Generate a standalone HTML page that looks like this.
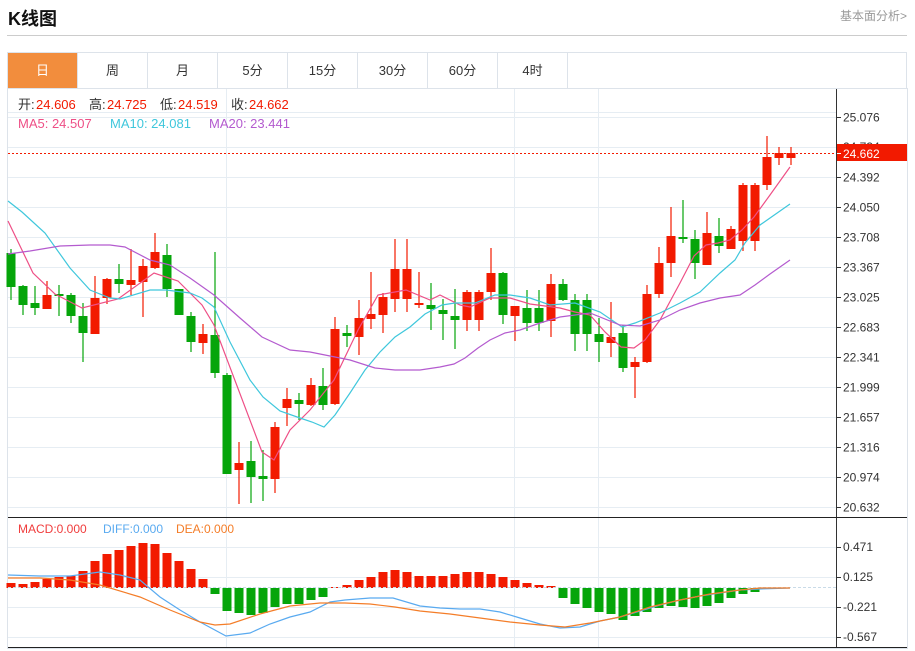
<!DOCTYPE html>
<html><head><meta charset="utf-8"><style>
*{margin:0;padding:0;box-sizing:border-box}
body{width:915px;height:651px;background:#fff;font-family:"Liberation Sans","Noto Sans CJK SC",sans-serif;position:relative;overflow:hidden}
.t{position:absolute;left:8px;top:5px;font-size:18px;font-weight:bold;color:#111}
.r{position:absolute;right:8px;top:7px;font-size:12px;color:#999}
.hl{position:absolute;left:7px;top:35px;width:900px;height:1px;background:#ccc}
.tabs{position:absolute;left:7px;top:52px;width:900px;height:37px;border:1px solid #dde3ea;display:flex}
.tabs div{width:70px;height:35px;line-height:35px;text-align:center;font-size:13px;color:#333;border-right:1px solid #dde3ea}
.tabs div.a{background:#f28d3d;color:#fff}
svg{position:absolute;left:0;top:0}
</style></head><body>
<div class="t">K线图</div><div class="r">基本面分析&gt;</div><div class="hl"></div>
<div class="tabs"><div class="a">日</div><div>周</div><div>月</div><div>5分</div><div>15分</div><div>30分</div><div>60分</div><div>4时</div></div>
<svg id="s" width="915" height="651" style="top:0"></svg>
<script>
var S='';
function L(x1,y1,x2,y2,c,w,d){S+='<line x1="'+x1+'" y1="'+y1+'" x2="'+x2+'" y2="'+y2+'" stroke="'+c+'" stroke-width="'+(w||1)+'"'+(d?' stroke-dasharray="'+d+'"':'')+'/>';}
function T(x,y,t,c,s){S+='<text x="'+x+'" y="'+y+'" fill="'+c+'" font-size="'+(s||12)+'" font-family="Liberation Sans,Noto Sans CJK SC,sans-serif">'+t+'</text>';}
function P(pts,c){S+='<polyline fill="none" stroke="'+c+'" stroke-width="1.2" points="'+pts.map(function(p){return p.join(',')}).join(' ')+'"/>';}
// frame
S+='<rect x="7.5" y="88.5" width="900" height="560" fill="none" stroke="#dde3ea"/>';
L(8,112.5,836,112.5,'#e6edf3');
var labs=['25.076','24.734','24.392','24.050','23.708','23.367','23.025','22.683','22.341','21.999','21.657','21.316','20.974','20.632'];
for(var i=0;i<14;i++){var y=117+i*30+.5;L(8,y,836,y,'#e6edf3');L(836,y,841,y,'#333');if(i!=1)T(843,y+4,labs[i],'#333');}
T(843,151,'24.734','#333');
[547,577,607,637].forEach(function(y,i){L(8,y+.5,836,y+.5,'#e6edf3');L(836,y+.5,841,y+.5,'#333');T(843,y+4,['0.471','0.125','-0.221','-0.567'][i],'#333');});
[226.5,514.5,598.5].forEach(function(x){L(x,89,x,647,'#e6edf3');});
L(836.5,89,836.5,517,'#333');L(836.5,518,836.5,648,'#333');
L(8,517.5,907,517.5,'#222');L(8,647.5,907,647.5,'#222');
// candles [open,close,high,low] y pixel; color by o<c? we pass color
var C=[[253,287,249,300,'g'],[286,305,285,315,'g'],[303,308,286,315,'g'],[295,309,281,309,'r'],[294,296,285,316,'g'],[295,316,293,323,'g'],[316,333,303,362,'g'],[298,334,276,334,'r'],[279,298,278,304,'r'],[279,284,264,293,'g'],[280,285,249,295,'r'],[266,282,259,317,'r'],[252,268,233,269,'r'],[255,289,244,297,'g'],[289,315,289,315,'g'],[316,342,312,352,'g'],[334,343,324,354,'r'],[335,373,252,378,'g'],[375,474,373,474,'g'],[463,470,442,504,'r'],[461,477,441,503,'g'],[476,479,450,501,'g'],[427,479,422,493,'r'],[399,408,388,426,'r'],[400,404,393,420,'g'],
[385,405,378,406,'r'],[386,405,368,410,'g'],[329,404,317,405,'r'],[333,336,325,347,'g'],[318,337,300,355,'r'],[314,319,272,329,'r'],[297,315,293,333,'r'],[269,299,239,312,'r'],[269,299,239,312,'r'],[303,304,272,308,'r'],[305,309,283,330,'g'],[310,314,299,340,'g'],[316,320,289,349,'g'],[292,320,290,331,'r'],[292,320,290,331,'r'],[273,292,248,300,'r'],[273,315,272,324,'g'],[306,316,306,341,'r'],[308,323,290,331,'g'],[308,323,290,331,'g'],[284,321,274,337,'r'],[284,300,279,301,'g'],[300,334,294,351,'g'],[300,334,294,351,'g'],
[334,342,318,362,'g'],[337,343,302,357,'r'],[333,368,325,372,'g'],[362,367,357,398,'r'],[294,362,285,363,'r'],[263,294,247,298,'r'],[236,263,207,277,'r'],[237,239,200,243,'g'],[239,263,230,279,'g'],[233,265,212,265,'r'],[236,246,218,253,'g'],[229,249,226,249,'r'],[185,241,183,251,'r'],[185,241,183,251,'r'],[157,185,136,190,'r'],[153,158,147,165,'r'],[153,158,147,165,'r']];
C.forEach(function(c,i){var x=11+i*12,col=c[4]=='r'?'#f21a00':'#05a50a';L(x,c[2],x,c[3],col,1.2);var t=Math.min(c[0],c[1]),h=Math.max(2,Math.abs(c[1]-c[0]));S+='<rect x="'+(x-4.5)+'" y="'+t+'" width="9" height="'+h+'" fill="'+col+'"/>';});
P([[8,221],[33,273],[55,294],[82,308],[118,299],[154,273],[178,281],[202,305],[214,325],[262,452],[274,460],[290,430],[310,410],[334,380],[358,330],[378,295],[406,290],[430,300],[440,295],[460,305],[470,307],[490,298],[510,298],[530,304],[560,308],[575,312],[590,315],[605,332],[621,347],[634,348],[645,340],[660,320],[680,283],[694,256],[706,245],[718,243],[730,240],[742,230],[754,217],[770,195],[790,167]],'#ee4f86');
P([[8,201],[22,212],[45,233],[70,268],[90,290],[110,298],[120,299],[150,290],[166,290],[190,293],[202,298],[214,307],[230,342],[250,380],[263,397],[280,411],[300,418],[312,422],[324,427],[335,415],[350,393],[365,370],[380,352],[395,337],[410,327],[425,314],[442,305],[455,303],[475,303],[495,295],[510,295],[530,298],[550,305],[575,303],[600,312],[622,327],[635,323],[660,313],[680,303],[700,292],[720,273],[735,260],[745,243],[760,225],[790,204]],'#3fc7dc');
P([[8,254],[30,251],[60,246],[90,245],[110,245],[125,247],[150,260],[170,265],[190,278],[214,295],[240,318],[262,337],[290,350],[310,352],[330,356],[350,360],[375,368],[395,370],[420,370],[440,367],[454,364],[465,358],[478,348],[490,340],[505,333],[520,330],[540,323],[560,317],[590,313],[620,325],[640,326],[660,320],[680,310],[700,303],[720,298],[740,295],[755,285],[770,274],[790,260]],'#b45bcf');
L(8,153.5,836,153.5,'#f21a00',1,'2,2');
S+='<rect x="837" y="144" width="70" height="17" fill="#f21a00"/>';L(837,153.5,841,153.5,'#fff');T(843,158,'24.662','#fff');
// info
T(18,109,'开:','#333',13);T(36,109,'24.606','#f21a00',13);T(89,109,'高:','#333',13);T(107,109,'24.725','#f21a00',13);T(160,109,'低:','#333',13);T(178,109,'24.519','#f21a00',13);T(231,109,'收:','#333',13);T(249,109,'24.662','#f21a00',13);
T(18,128,'MA5: 24.507','#ee4f86',13);T(110,128,'MA10: 24.081','#3fc7dc',13);T(209,128,'MA20: 23.441','#b45bcf',13);
T(18,533,'MACD:0.000','#f03c3c',12);T(103,533,'DIFF:0.000','#59aaf0',12);T(176,533,'DEA:0.000','#f47d28',12);
// macd
var M=[583,584,582,579,577,576,571,561,554,550,546,543,544,553,561,569,579,594,611,613,615,613,607,604,604,600,597,587,585,580,577,572,570,572,576,576,576,574,572,572,574,577,580,583,585,586,598,604,608,612,614,620,616,612,608,606,607,608,606,603,598,594,592,589,588,588];
var Z=588;
M.forEach(function(y,i){var x=11+i*12;if(y<Z){S+='<rect x="'+(x-4.5)+'" y="'+y+'" width="9" height="'+(Z-y)+'" fill="#f21a00"/>';}else if(y>Z){S+='<rect x="'+(x-4.5)+'" y="'+Z+'" width="9" height="'+(y-Z)+'" fill="#05a50a"/>';}});
L(8,587.5,836,587.5,'#c9dbe8',1,'3,2');
P([[8,575],[40,576],[70,576],[100,572],[120,575],[140,580],[160,597],[180,610],[200,622],[226,636],[250,633],[270,624],[290,617],[310,612],[330,602],[345,600],[370,598],[393,598],[420,606],[440,608],[460,609],[480,609],[500,612],[520,618],[540,624],[560,628],[580,627],[600,621],[620,617],[640,611],[660,605],[680,600],[700,596],[720,593],[740,590],[760,589],[790,588]],'#59aaf0');
P([[8,578],[40,578],[70,580],[100,585],[140,597],[170,610],[200,622],[215,625],[230,624],[260,614],[290,606],[320,603],[345,603],[370,604],[395,607],[420,611],[450,614],[480,618],[510,622],[540,625],[565,627],[590,623],[620,617],[650,607],[680,600],[710,594],[740,590],[760,588],[790,588]],'#f47d28');
document.getElementById('s').innerHTML=S;
</script>
</body></html>
